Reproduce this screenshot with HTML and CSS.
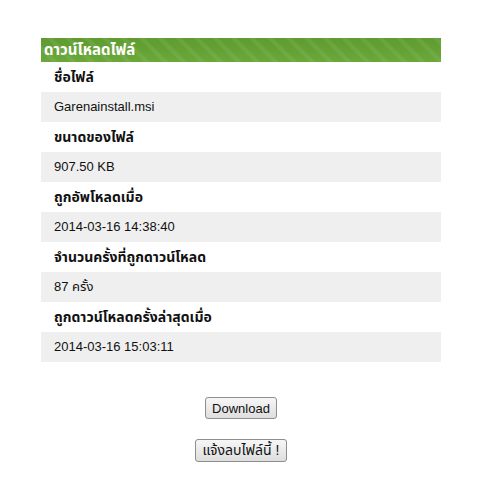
FILE: index.html
```html
<!DOCTYPE html>
<html>
<head>
<meta charset="utf-8">
<link rel="stylesheet" href="styles.css">
</head>
<body>
<div class="wrap">
  <div class="box">
    <div class="head">ดาวน์โหลดไฟล์</div>
    <div class="row label">ชื่อไฟล์</div>
    <div class="row value">Garenainstall.msi</div>
    <div class="row label">ขนาดของไฟล์</div>
    <div class="row value">907.50 KB</div>
    <div class="row label">ถูกอัพโหลดเมื่อ</div>
    <div class="row value">2014-03-16 14:38:40</div>
    <div class="row label">จำนวนครั้งที่ถูกดาวน์โหลด</div>
    <div class="row value">87 ครั้ง</div>
    <div class="row label">ถูกดาวน์โหลดครั้งล่าสุดเมื่อ</div>
    <div class="row value">2014-03-16 15:03:11</div>
  </div>
  <div class="actions">
    <button class="btn">Download</button>
    <button class="btn btn-thai">แจ้งลบไฟล์นี้ !</button>
  </div>
</div>
</body>
</html>
```

FILE: styles.css
```css
html, body {
  margin: 0;
  padding: 0;
  background: #fff;
}
body {
  font-family: "Liberation Sans", Arial, "Noto Sans Thai", Tahoma, sans-serif;
  font-size: 13px;
  color: #111;
}
.wrap {
  width: 400px;
  margin-left: 41px;
  padding-top: 38px;
}
.head {
  height: 24px;
  line-height: 24px;
  padding-left: 3px;
  color: #fff;
  font-weight: bold;
  font-size: 15px;
  background-color: #64a034;
  background-image: repeating-linear-gradient(45deg, rgba(255,255,255,0) 0px, rgba(255,255,255,0) 7px, rgba(255,255,255,0.07) 9px, rgba(255,255,255,0.07) 11px, rgba(255,255,255,0) 13px),
                    linear-gradient(to bottom, #5f9b30, #6aa83a);
}
.row {
  height: 30px;
  line-height: 30px;
  padding-left: 13px;
}
.label {
  background: #fff;
  font-weight: bold;
  font-size: 14px;
}
.value {
  background: #efefef;
}
.actions {
  display: flex;
  flex-direction: column;
  align-items: center;
  gap: 20px;
  padding-top: 35px;
}
.btn {
  font-family: "Liberation Sans", Arial, "Noto Sans Thai", sans-serif;
  font-size: 13px;
  color: #111;
  height: 22px;
  padding: 0 6px;
  border: 1px solid #8e8e8e;
  border-radius: 3px;
  background: linear-gradient(to bottom, #f6f6f6, #dedede);
}
.btn-thai {
  font-size: 14px;
  height: 23px;
  padding: 0 7px;
}
```
